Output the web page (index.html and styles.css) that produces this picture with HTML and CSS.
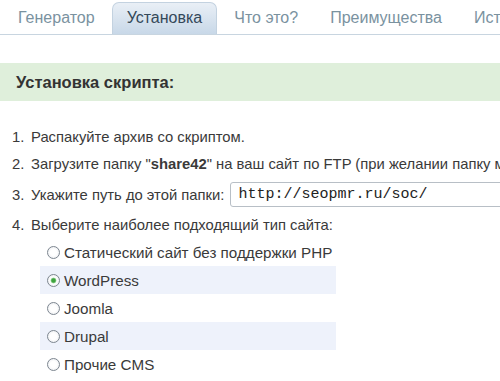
FILE: index.html
```html
<!DOCTYPE html>
<html>
<head>
  <meta charset="UTF-8">
  <title>Установка скрипта</title>
  <link rel="stylesheet" href="styles.css">
</head>
<body>
  <ul class="tabs">
    <li>Генератор</li>
    <li class="active">Установка</li>
    <li>Что это?</li>
    <li>Преимущества</li>
    <li>История</li>
  </ul>

  <h2 class="band">Установка скрипта:</h2>

  <div class="steps">
    <div class="step"><span class="num">1.</span><span>Распакуйте архив со скриптом.</span></div>
    <div class="step"><span class="num">2.</span><span class="txt">Загрузите папку "<b>share42</b>" на ваш сайт по FTP (при желании папку можно переименовать).</span></div>
    <div class="step tall"><span class="num">3.</span><span>Укажите путь до этой папки:</span>
      <input class="path" type="text" value="http://seopmr.ru/soc/">
    </div>
    <div class="step"><span class="num">4.</span><span>Выберите наиболее подходящий тип сайта:</span></div>
  </div>

  <div class="options">
    <label class="opt"><input type="radio" name="type"> Статический сайт без поддержки PHP</label>
    <label class="opt alt"><input type="radio" name="type" checked> WordPress</label>
    <label class="opt"><input type="radio" name="type"> Joomla</label>
    <label class="opt alt"><input type="radio" name="type"> Drupal</label>
    <label class="opt"><input type="radio" name="type"> Прочие CMS</label>
  </div>
</body>
</html>
```

FILE: styles.css
```css
body {
  margin: 0;
  font-family: "Liberation Sans", Arial, sans-serif;
  color: #3a3a3a;
  background-color: #fff;
  overflow: hidden;
}

.tabs {
  display: flex;
  margin: 0;
  padding: 2px 0 0 3px;
  list-style: none;
  border-bottom: 1px solid #c8d5e0;
  white-space: nowrap;
  overflow: hidden;
}

.tabs li {
  padding: 0 14px;
  margin-right: 2px;
  height: 31px;
  line-height: 30px;
  font-size: 16px;
  color: #7a929f;
  border: 1px solid transparent;
  border-bottom: none;
  border-radius: 7px 7px 0 0;
}

.tabs li.active {
  color: #34495a;
  background: linear-gradient(#e9eff6, #c8d8e8);
  border-color: #c3d2e0;
}

.band {
  margin: 28px 0 0;
  height: 38px;
  padding-left: 16px;
  line-height: 38px;
  font-size: 16.5px;
  color: #333;
  background-color: #dfefdb;
}

.steps {
  margin-top: 22px;
  padding-left: 12px;
  font-size: 14.8px;
  white-space: nowrap;
}

.step {
  display: flex;
  align-items: center;
  height: 27px;
}

.step.tall {
  height: 31px;
  margin: 2px 0 1px;
}

.num {
  flex-shrink: 0;
  width: 19px;
}

.txt {
  overflow: hidden;
}

.path {
  flex-shrink: 0;
  margin-left: 6px;
  width: 300px;
  height: 25px;
  padding: 0 7px;
  font-family: "Liberation Mono", "Courier New", monospace;
  font-size: 15px;
  color: #222;
  border: 1px solid #b8bfc6;
  border-radius: 3px;
  box-sizing: border-box;
}

.options {
  padding-left: 40px;
  font-size: 15.2px;
}

.opt {
  display: flex;
  align-items: center;
  width: 296px;
  height: 28px;
  padding-left: 7px;
  box-sizing: border-box;
  white-space: nowrap;
}

.opt.alt {
  background-color: #eef2fb;
}

.opt input {
  appearance: none;
  -webkit-appearance: none;
  margin: 0 4px 0 0;
  width: 13px;
  height: 13px;
  border: 1px solid #7d8690;
  border-radius: 50%;
  background: radial-gradient(#fff 40%, #e4e7eb);
  box-sizing: border-box;
}

.opt input:checked {
  background: radial-gradient(#3fa33f 22%, #8fd08f 32%, #fff 42%, #e4e7eb);
}
```
